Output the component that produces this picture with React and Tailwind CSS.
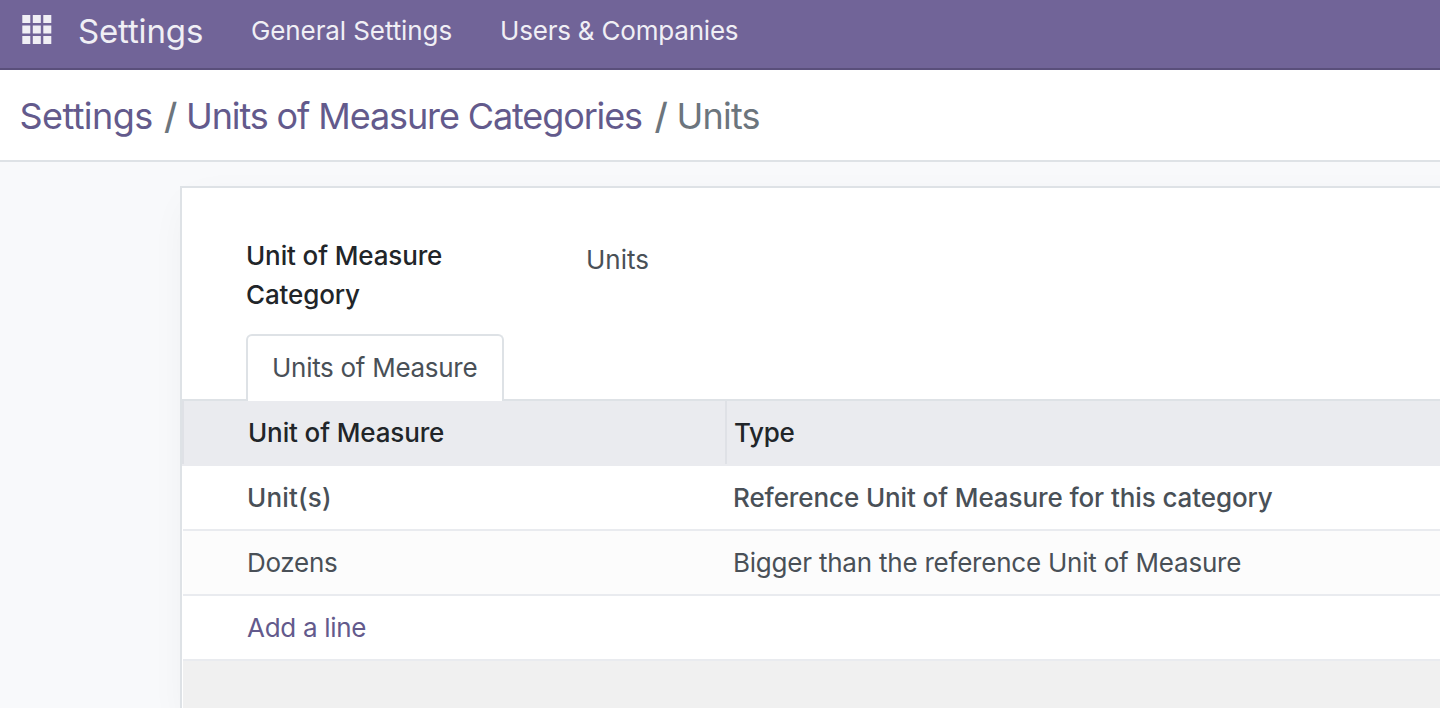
export default function App() {
  return (
    <div className="h-[708px] w-[1440px] overflow-hidden bg-[#f8f9fb] font-['Inter',sans-serif] text-[26px] text-[#495057]">
      <header className="flex h-[70px] items-start border-b-2 border-[#5a4f7b] bg-[#716498] text-[#f0eff5]">
        <svg className="mt-[15px] ml-[22px] shrink-0" width="30" height="30" viewBox="0 0 30 30" fill="currentColor">
          {[0, 10.5, 21].map((y) => [0.3, 10.8, 21.3].map((x) => <rect key={`${x}-${y}`} x={x} y={y} width="8" height="8" />))}
        </svg>
        <span className="ml-[26px] w-[173px] text-[33px] leading-[62px] tracking-[-0.15px]">Settings</span>
        <span className="w-[249px] leading-[62px] tracking-[-0.1px]">General Settings</span>
        <span className="leading-[62px] tracking-[-0.2px]">Users &amp; Companies</span>
      </header>
      <nav className="flex h-[92px] items-center border-b-2 border-[#dee2e6] bg-white pt-px pl-[19.5px] text-[36px] text-[#635a8c]">
        <span className="w-[144.5px] tracking-[-0.6px]">Settings</span>
        <span className="w-[22px] font-medium text-[#6c757d]">/</span>
        <span className="w-[468.5px] tracking-[-1.12px] whitespace-nowrap">Units of Measure Categories</span>
        <span className="w-[22px] font-medium text-[#6c757d]">/</span>
        <span className="tracking-[-0.8px] text-[#6c757d]">Units</span>
      </nav>
      <main className="pt-6 pl-[180px]">
        <section className="h-[540px] w-[1320px] border-t-2 border-l-2 border-[#dee2e6] bg-white shadow-[0_10px_40px_-10px_rgba(0,0,0,0.06)]">
          <div className="flex h-[146px] pt-12 pl-16">
            <div className="w-[340px] leading-[39px] font-medium tracking-[-0.13px] text-[#212529]">Unit of Measure<br />Category</div>
            <div className="pt-1 leading-[39px]">Units</div>
          </div>
          <div className="flex h-[67px] border-b-2 border-[#dee2e6] pl-16">
            <div className="h-[67px] w-[258px] rounded-t-[6px] border-2 border-b-0 border-[#dee2e6] bg-white pl-6 leading-[64px] tracking-[-0.29px]">Units of Measure</div>
          </div>
          <div className="flex h-[65px] border-b-2 border-[#eaebef] bg-[#eaebef] leading-[64px] font-medium text-[#212529]">
            <div className="w-[545px] border-x-2 border-[#dfe1e6] pl-[64px] tracking-[-0.13px]">Unit of Measure</div>
            <div className="pl-[7px] tracking-[-0.3px]">Type</div>
          </div>
          <div className="ml-px flex h-[65px] border-b-2 border-[#e9ebef] leading-[64px] font-medium"><div className="w-[550px] pl-[64px] tracking-[0.2px]">Unit(s)</div><div className="tracking-[-0.1px]">Reference Unit of Measure for this category</div></div>
          <div className="ml-px flex h-[65px] border-b-2 border-[#e9ebef] bg-[#fcfcfc] leading-[64px]"><div className="w-[550px] pl-[64px] tracking-[-0.3px]">Dozens</div><div className="tracking-[-0.22px]">Bigger than the reference Unit of Measure</div></div>
          <div className="ml-px h-[65px] border-b-2 border-[#e9ebef] pl-[64px] leading-[64px] tracking-[-0.3px] text-[#635a8c]">Add a line</div>
          <div className="ml-px h-20 bg-[#f0f0f0]" />
        </section>
      </main>
    </div>
  );
}
